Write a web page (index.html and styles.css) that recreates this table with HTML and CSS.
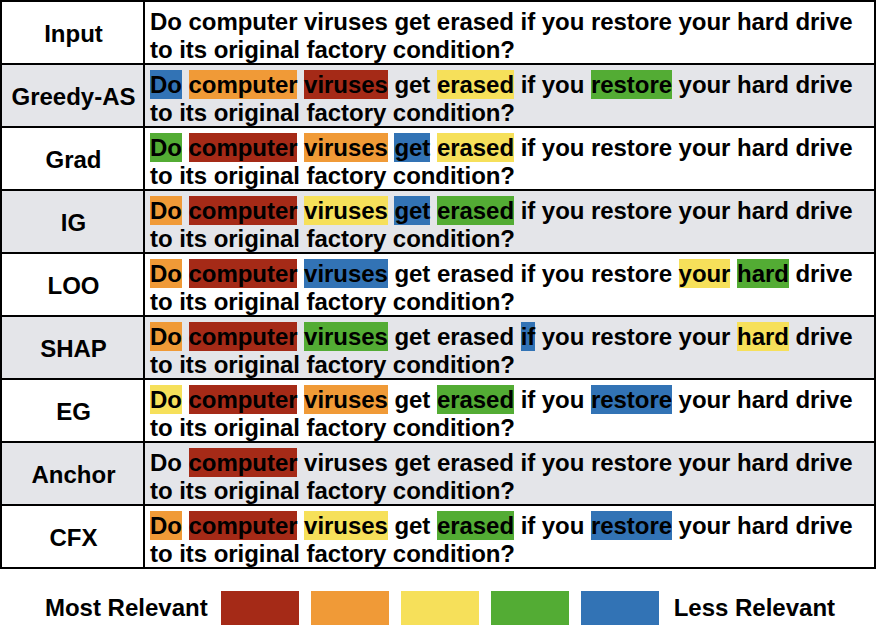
FILE: index.html
```html
<!DOCTYPE html>
<html>
<head>
<meta charset="utf-8">
<link rel="stylesheet" href="styles.css">
</head>
<body>
<div class="table">
  <div class="row">
    <div class="label">Input</div>
    <div class="text">Do computer viruses get erased if you restore your hard drive<br>to its original factory condition?</div>
  </div>
  <div class="row alt">
    <div class="label">Greedy-AS</div>
    <div class="text"><span class="hl blue">Do</span> <span class="hl orange">computer</span> <span class="hl red">viruses</span> get <span class="hl yellow">erased</span> if you <span class="hl green">restore</span> your hard drive<br>to its original factory condition?</div>
  </div>
  <div class="row">
    <div class="label">Grad</div>
    <div class="text"><span class="hl green">Do</span> <span class="hl red">computer</span> <span class="hl orange">viruses</span> <span class="hl blue">get</span> <span class="hl yellow">erased</span> if you restore your hard drive<br>to its original factory condition?</div>
  </div>
  <div class="row alt">
    <div class="label">IG</div>
    <div class="text"><span class="hl orange">Do</span> <span class="hl red">computer</span> <span class="hl yellow">viruses</span> <span class="hl blue">get</span> <span class="hl green">erased</span> if you restore your hard drive<br>to its original factory condition?</div>
  </div>
  <div class="row">
    <div class="label">LOO</div>
    <div class="text"><span class="hl orange">Do</span> <span class="hl red">computer</span> <span class="hl blue">viruses</span> get erased if you restore <span class="hl yellow">your</span> <span class="hl green">hard</span> drive<br>to its original factory condition?</div>
  </div>
  <div class="row alt">
    <div class="label">SHAP</div>
    <div class="text"><span class="hl orange">Do</span> <span class="hl red">computer</span> <span class="hl green">viruses</span> get erased <span class="hl blue">if</span> you restore your <span class="hl yellow">hard</span> drive<br>to its original factory condition?</div>
  </div>
  <div class="row">
    <div class="label">EG</div>
    <div class="text"><span class="hl yellow">Do</span> <span class="hl red">computer</span> <span class="hl orange">viruses</span> get <span class="hl green">erased</span> if you <span class="hl blue">restore</span> your hard drive<br>to its original factory condition?</div>
  </div>
  <div class="row alt">
    <div class="label">Anchor</div>
    <div class="text">Do <span class="hl red">computer</span> viruses get erased if you restore your hard drive<br>to its original factory condition?</div>
  </div>
  <div class="row last">
    <div class="label">CFX</div>
    <div class="text"><span class="hl orange">Do</span> <span class="hl red">computer</span> <span class="hl yellow">viruses</span> get <span class="hl green">erased</span> if you <span class="hl blue">restore</span> your hard drive<br>to its original factory condition?</div>
  </div>
</div>
<div class="legend">
  <span class="legend-text most">Most Relevant</span>
  <span class="swatch red"></span>
  <span class="swatch orange"></span>
  <span class="swatch yellow"></span>
  <span class="swatch green"></span>
  <span class="swatch blue"></span>
  <span class="legend-text less">Less Relevant</span>
</div>
</body>
</html>
```
FILE: styles.css
```css
html, body {
  margin: 0;
  padding: 0;
  background: #ffffff;
}
body {
  font-family: "Liberation Sans", Arial, Helvetica, sans-serif;
  font-weight: bold;
  font-size: 24px;
  color: #000;
  width: 878px;
  height: 632px;
  overflow: hidden;
}
.table {
  width: 872px;
  border: 2px solid #000;
}
.row {
  display: grid;
  grid-template-columns: 143px 1fr;
  height: 61px;
  border-bottom: 2px solid #000;
  background: #ffffff;
}
.row.last {
  border-bottom: none;
}
.row.alt {
  background: #e4e5e9;
}
.label {
  display: flex;
  align-items: center;
  justify-content: center;
  border-right: 2px solid #000;
  line-height: 28px;
  padding-top: 2px;
  padding-left: 2px;
}
.text {
  padding: 6px 0 0 5px;
  line-height: 28px;
  white-space: nowrap;
  letter-spacing: -0.05px;
}
.hl {
  padding: 1px 0;
}
.red { background: #a52a17; }
.orange { background: #f09a37; }
.yellow { background: #f6e05a; }
.green { background: #53ac34; }
.blue { background: #3273b5; }
.legend {
  display: flex;
  align-items: center;
  justify-content: center;
  gap: 12px;
  margin-top: 22px;
  padding-left: 2px;
}
.legend-text {
  line-height: 34px;
}
.legend-text.most {
  margin-right: 1px;
}
.legend-text.less {
  margin-left: 3px;
}
.swatch {
  display: block;
  width: 78px;
  height: 34px;
}
```
